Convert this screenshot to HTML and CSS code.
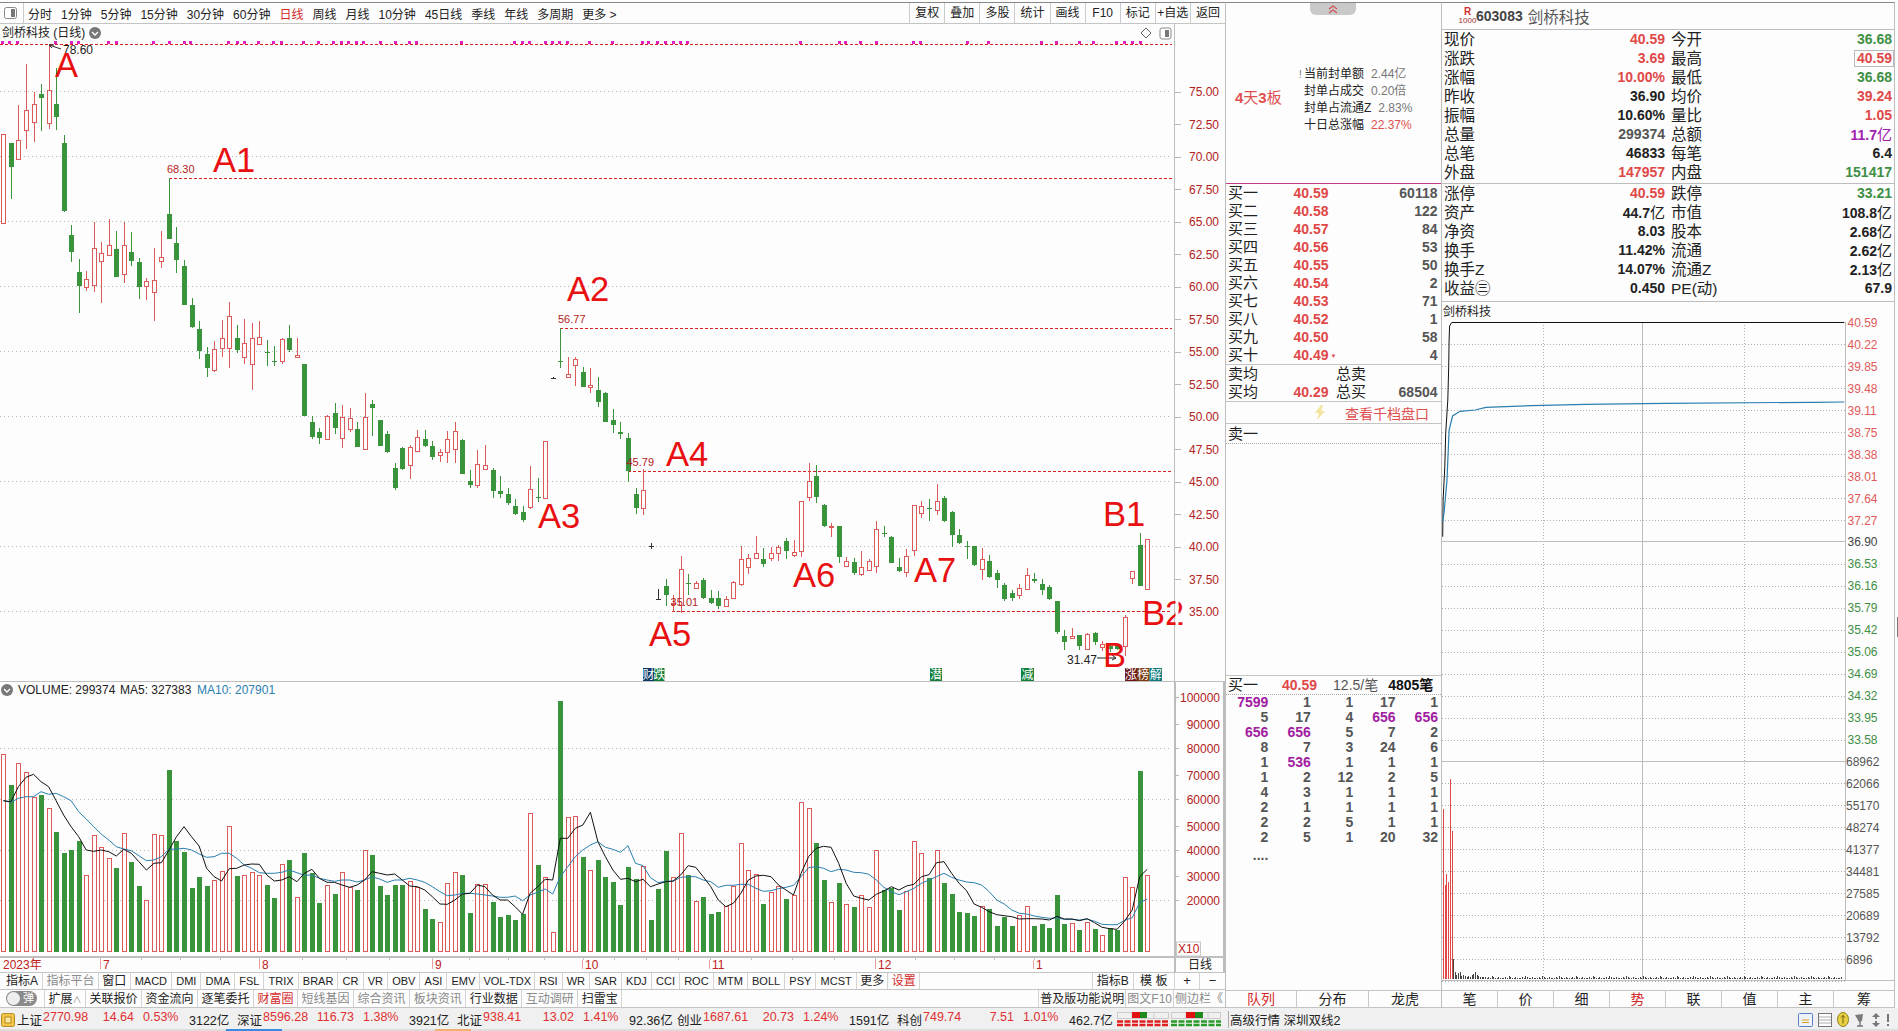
FILE: index.html
```html
<!DOCTYPE html>
<html lang="zh-CN">
<head>
<meta charset="utf-8">
<title>剑桥科技 日线</title>
<link rel="stylesheet" href="styles.css">
</head>
<body>
<div class="main">
  <section class="left">
    <div class="toolbar">
      <div class="tb-icon"><svg width="13" height="12" viewBox="0 0 13 12"><rect x="0.5" y="0.5" width="12" height="11" rx="2" fill="#fff" stroke="#888"/><rect x="7" y="2" width="4" height="8" fill="#777"/></svg></div>
      <div class="tb-tabs">
        <span>分时</span><span>1分钟</span><span>5分钟</span><span>15分钟</span><span>30分钟</span><span>60分钟</span><span class="red">日线</span><span>周线</span><span>月线</span><span>10分钟</span><span>45日线</span><span>季线</span><span>年线</span><span>多周期</span><span>更多 &gt;</span>
      </div>
      <div class="tb-btns">
        <span>复权</span><span>叠加</span><span>多股</span><span>统计</span><span>画线</span><span>F10</span><span>标记</span><span>+自选</span><span>返回</span>
      </div>
    </div>
    <svg id="kline" class="kline" width="1225" height="948" viewBox="0 24 1225 948"></svg>
    <div class="ind-row">
      <span class="c first">指标A</span><span class="c gray">指标平台</span><span class="c">窗口</span><span class="c en">MACD</span><span class="c en">DMI</span><span class="c en">DMA</span><span class="c en">FSL</span><span class="c en">TRIX</span><span class="c en">BRAR</span><span class="c en">CR</span><span class="c en">VR</span><span class="c en">OBV</span><span class="c en">ASI</span><span class="c en">EMV</span><span class="c en tight">VOL-TDX</span><span class="c en">RSI</span><span class="c en">WR</span><span class="c en">SAR</span><span class="c en">KDJ</span><span class="c en">CCI</span><span class="c en">ROC</span><span class="c en">MTM</span><span class="c en">BOLL</span><span class="c en">PSY</span><span class="c en">MCST</span><span class="c">更多</span><span class="c red">设置</span>
      <div class="ind-right">
        <span class="c w41 bl">指标B</span><span class="c w41">模 板</span><span class="c w25">+</span><span class="c w25 noborder">−</span>
      </div>
    </div>
    <div class="tab-row">
      <div class="toggle"><i class="knob"></i><b>弹</b></div>
      <span class="c bl">扩展<small>∧</small></span><span class="c">关联报价</span><span class="c">资金流向</span><span class="c">逐笔委托</span><span class="c red">财富圈</span><span class="c gray">短线基因</span><span class="c gray">综合资讯</span><span class="c gray">板块资讯</span><span class="c">行业数据</span><span class="c gray">互动调研</span><span class="c">扫雷宝</span>
      <div class="ind-right">
        <span class="c bl">普及版功能说明</span><span class="c gray">图文F10</span><span class="c gray noborder">侧边栏《</span>
      </div>
    </div>
  </section>

  <section class="mid">
    <div class="collapse"><svg width="12" height="9" viewBox="0 0 12 9"><path d="M2 4 6 1 10 4M2 8 6 5 10 8" fill="none" stroke="#d05050" stroke-width="1.2"/></svg></div>
    <div class="info">
      <div class="streak"><b>4</b>天<b>3</b>板</div>
      <div class="info-list">
        <div><span class="bang">!</span>当前封单额<em>2.44亿</em></div>
        <div><span class="bang"></span>封单占成交<em>0.20倍</em></div>
        <div><span class="bang"></span>封单占流通Z<em>2.83%</em></div>
        <div><span class="bang"></span>十日总涨幅<em class="red">22.37%</em></div>
      </div>
    </div>
    <div class="ob">
      <div class="ob-row"><span>买一</span><b class="red">40.59</b><b class="qty">60118</b></div>
      <div class="ob-row"><span>买二</span><b class="red">40.58</b><b class="qty">122</b></div>
      <div class="ob-row"><span>买三</span><b class="red">40.57</b><b class="qty">84</b></div>
      <div class="ob-row"><span>买四</span><b class="red">40.56</b><b class="qty">53</b></div>
      <div class="ob-row"><span>买五</span><b class="red">40.55</b><b class="qty">50</b></div>
      <div class="ob-row"><span>买六</span><b class="red">40.54</b><b class="qty">2</b></div>
      <div class="ob-row"><span>买七</span><b class="red">40.53</b><b class="qty">71</b></div>
      <div class="ob-row"><span>买八</span><b class="red">40.52</b><b class="qty">1</b></div>
      <div class="ob-row"><span>买九</span><b class="red">40.50</b><b class="qty">58</b></div>
      <div class="ob-row"><span>买十</span><b class="red">40.49<small class="dn">▼</small></b><b class="qty">4</b></div>
    </div>
    <div class="ob-avg">
      <div class="avg-row"><span>卖均</span><b class="red"></b><span>总卖</span><b class="qty"></b></div>
      <div class="avg-row"><span>买均</span><b class="red">40.29</b><span>总买</span><b class="qty">68504</b></div>
    </div>
    <div class="depth"><svg width="12" height="15" viewBox="0 0 12 15"><path d="M7 0 1 8h4L3 15l8-9H7l2-6z" fill="#f2e59a"/></svg><span>查看千档盘口</span></div>
    <div class="ask"><span>卖一</span></div>
    <div class="ob-gap"></div>
    <div class="queue-head"><span>买一</span><b class="red">40.59</b><em>12.5/笔</em><strong>4805笔</strong></div>
    <div class="queue">
      <b class="pur">7599</b><b>1</b><b>1</b><b>17</b><b>1</b>
      <b>5</b><b>17</b><b>4</b><b class="pur">656</b><b class="pur">656</b>
      <b class="pur">656</b><b class="pur">656</b><b>5</b><b>7</b><b>2</b>
      <b>8</b><b>7</b><b>3</b><b>24</b><b>6</b>
      <b>1</b><b class="pur">536</b><b>1</b><b>1</b><b>1</b>
      <b>1</b><b>2</b><b>12</b><b>2</b><b>5</b>
      <b>4</b><b>3</b><b>1</b><b>1</b><b>1</b>
      <b>2</b><b>1</b><b>1</b><b>1</b><b>1</b>
      <b>2</b><b>2</b><b>5</b><b>1</b><b>1</b>
      <b>2</b><b>5</b><b>1</b><b>20</b><b>32</b>
      <b class="dots">....</b>
    </div>
    <div class="grow"></div>
    <div class="tabs t3"><span class="red">队列</span><span>分布</span><span>龙虎</span></div>
  </section>

  <section class="right">
    <div class="head">
      <div class="rbadge"><b>R</b><i>1000</i></div><strong>603083</strong><span>剑桥科技</span>
    </div>
    <div class="quote q1">
      <div class="q-row"><span>现价</span><b class="red">40.59</b><span class="l2">今开</span><b class="grn">36.68</b></div>
      <div class="q-row"><span>涨跌</span><b class="red">3.69</b><span class="l2">最高</span><b class="red"><i class="boxed">40.59</i></b></div>
      <div class="q-row"><span>涨幅</span><b class="red">10.00%</b><span class="l2">最低</span><b class="grn">36.68</b></div>
      <div class="q-row"><span>昨收</span><b>36.90</b><span class="l2">均价</span><b class="red">39.24</b></div>
      <div class="q-row"><span>振幅</span><b>10.60%</b><span class="l2">量比</span><b class="red">1.05</b></div>
      <div class="q-row"><span>总量</span><b class="gry">299374</b><span class="l2">总额</span><b class="pur">11.7<u>亿</u></b></div>
      <div class="q-row"><span>总笔</span><b>46833</b><span class="l2">每笔</span><b>6.4</b></div>
      <div class="q-row"><span>外盘</span><b class="red">147957</b><span class="l2">内盘</span><b class="grn">151417</b></div>
    </div>
    <div class="quote q2">
      <div class="q-row"><span>涨停</span><b class="red">40.59</b><span class="l2">跌停</span><b class="grn">33.21</b></div>
      <div class="q-row"><span>资产</span><b>44.7<u>亿</u></b><span class="l2">市值</span><b>108.8<u>亿</u></b></div>
      <div class="q-row"><span>净资</span><b>8.03</b><span class="l2">股本</span><b>2.68<u>亿</u></b></div>
      <div class="q-row"><span>换手</span><b>11.42%</b><span class="l2">流通</span><b>2.62<u>亿</u></b></div>
      <div class="q-row"><span>换手Z</span><b>14.07%</b><span class="l2">流通Z</span><b>2.13<u>亿</u></b></div>
      <div class="q-row"><span>收益㊂</span><b>0.450</b><span class="l2">PE(动)</span><b>67.9</b></div>
    </div>
    <svg id="intraday" class="intraday" width="452" height="688" viewBox="1442 302 452 688"></svg>
    <div class="tabs t8"><span>笔</span><span>价</span><span>细</span><span class="red">势</span><span>联</span><span>值</span><span>主</span><span>筹</span></div>
  </section>
</div>

<footer class="status">
  <div class="st-icon"><svg width="14" height="14" viewBox="0 0 14 14"><rect x="0.5" y="0.5" width="13" height="13" rx="2" fill="#f3c64a" stroke="#b98a20"/><rect x="4" y="4" width="6" height="6" fill="#f9e7a0" stroke="#b98a20"/></svg></div>
  <div class="st-g"><span>上证</span><i>2770.98</i><i class="r">14.64</i><i class="p">0.53%</i><span>3122亿</span></div>
  <div class="st-g"><span>深证</span><i>8596.28</i><i class="r">116.73</i><i class="p">1.38%</i><span>3921亿</span></div>
  <div class="st-g"><span>北证</span><i>938.41</i><i class="r">13.02</i><i class="p">1.41%</i><span>92.36亿</span></div>
  <div class="st-g"><span>创业</span><i>1687.61</i><i class="r">20.73</i><i class="p">1.24%</i><span>1591亿</span></div>
  <div class="st-g"><span>科创</span><i>749.74</i><i class="r">7.51</i><i class="p">1.01%</i><span>462.7亿</span></div>
  <div class="mini">
    <svg width="52" height="16" viewBox="0 0 52 16"><g fill="none" stroke="#ccc"><rect x="0.5" y="0.5" width="51" height="6"/><path d="M15 0v7M37 0v7"/></g><rect x="15" y="0" width="8" height="6" fill="#e01010"/><rect x="23" y="0" width="7" height="6" fill="#1e8a1e"/><path d="M0 9.5h52M0 13h52" stroke="#e02020" stroke-width="2.4" stroke-dasharray="6 1.5"/></svg>
    <svg width="50" height="16" viewBox="0 0 50 16"><g fill="none" stroke="#ccc"><rect x="0.5" y="0.5" width="49" height="6"/><path d="M15 0v7M37 0v7"/></g><rect x="15" y="0" width="9" height="6" fill="#e01010"/><rect x="24" y="0" width="8" height="6" fill="#1e8a1e"/><path d="M0 9.5h50M0 13h50" stroke="#2a9a2a" stroke-width="2.4" stroke-dasharray="6 1.5"/></svg>
  </div>
  <div class="st-feed">高级行情 深圳双线2</div>
  <div class="st-tools">
    <svg width="15" height="14" viewBox="0 0 15 14"><rect x="0.5" y="0.5" width="14" height="13" rx="1" fill="#eef3fb" stroke="#5a7fc0"/><path d="M4 7h7M4 9.5h7" stroke="#d8a020"/></svg>
    <svg width="14" height="14" viewBox="0 0 14 14"><rect x="0.5" y="0.5" width="13" height="13" fill="#fff" stroke="#777"/><path d="M1 4h12M1 7h12M1 10h12" stroke="#aaa"/></svg>
    <svg width="12" height="15" viewBox="0 0 12 15"><ellipse cx="6" cy="7.5" rx="5.5" ry="7" fill="#e8d040" stroke="#8a8020"/><path d="M6 3.5v8M4 5.5 6 3.5l2 2" fill="none" stroke="#6a6010"/></svg>
    <svg width="12" height="14" viewBox="0 0 12 14"><path d="M1 2 9 1 8 8 5 9z" fill="#7a7a7a"/><path d="M6 8v5M3 13h6" stroke="#777" stroke-width="1.4"/></svg>
    <svg width="10" height="14" viewBox="0 0 10 14"><path d="M5 0 9 4H6v2H4V4H1zM4 8h2v2h3l-4 4-4-4h3z" fill="#777"/></svg>
    <svg width="4" height="14" viewBox="0 0 4 14"><path d="M1 1h2v8H1zM1 11h2v2H1z" fill="#777"/></svg>
  </div>
  <div class="strip"></div>
</footer>
<div class="grip"></div>
<script src="chart.js"></script>
</body>
</html>
```

FILE: styles.css
```css
* { box-sizing: border-box; }
html, body { margin: 0; padding: 0; }
body {
  position: relative;
  width: 1898px;
  height: 1031px;
  overflow: hidden;
  background: #fdfdfd;
  color: #222;
  font-family: "Liberation Sans", "Noto Sans CJK SC", sans-serif;
  font-size: 12px;
}
.red { color: #d42a2a; }
.gray { color: #8a8a8a; }
.main {
  display: grid;
  grid-template-columns: 1225px 216px 457px;
  height: 1008px;
  margin-top: 0;
  padding-top: 2px;
}
.left, .mid, .right {
  display: flex;
  flex-direction: column;
  border-top: 1px solid #888;
  min-width: 0;
}
.mid { border-left: 1px solid #bdbdbd; }
.right { border-left: 1px solid #bdbdbd; border-right: 1px solid #bdbdbd; margin-right: 3px; }
.grip {
  position: absolute;
  right: 0;
  top: 617px;
  width: 1px;
  height: 20px;
  background: #777;
}

/* toolbar */
.toolbar {
  display: flex;
  align-items: center;
  height: 21px;
  border-bottom: 1px solid #c4c4c4;
}
.tb-icon {
  display: flex;
  align-items: center;
  width: 24px;
  height: 20px;
  padding-left: 4px;
  border-right: 1px solid #ccc;
  flex: none;
}
.tb-tabs { display: flex; gap: 9px; padding-left: 4px; }
.tb-btns { display: flex; margin-left: auto; height: 20px; }
.tb-btns span {
  width: 35.1px;
  line-height: 20px;
  text-align: center;
  border-left: 1px solid #ccc;
}
.kline { display: block; flex: none; }

/* svg text */
.t-axis { font: 12px "Liberation Sans", sans-serif; fill: #b22222; }
.t-red { font: 11px "Liberation Sans", sans-serif; fill: #b22222; }
.t-blk { font: 12px "Liberation Sans", sans-serif; fill: #222; }
.t-blue { font: 12px "Liberation Sans", sans-serif; fill: #2a7fb0; }
.t-cjk { font: 12px "Liberation Sans", "Noto Sans CJK SC", sans-serif; fill: #222; }
.t-note { font: 34.5px "Liberation Sans", sans-serif; fill: #e81010; }
.t-tag { font: 12px "Noto Sans CJK SC", sans-serif; fill: #fff; }
.t-date { font: 12px "Liberation Sans", "Noto Sans CJK SC", sans-serif; fill: #c02020; }
.t-pr { font: 12px "Liberation Sans", sans-serif; fill: #e05a5a; }
.t-pg { font: 12px "Liberation Sans", sans-serif; fill: #3f8f45; }
.t-pk { font: 12px "Liberation Sans", sans-serif; fill: #444; }
.t-vl { font: 12px "Liberation Sans", sans-serif; fill: #555; }

/* lower rows */
.ind-row, .tab-row {
  display: flex;
  align-items: stretch;
  border-top: 1px solid #c4c4c4;
  flex: none;
}
.ind-row { height: 17px; }
.tab-row { height: 19px; border-bottom: 1px solid #c4c4c4; }
.c {
  padding: 0 3.3px;
  border-right: 1px solid #d4d4d4;
  white-space: nowrap;
  line-height: 16px;
  font-size: 12px;
}
.c.en { font-size: 11px; padding: 0 4.1px; }
.c.en.tight { padding: 0 3px; }
.tab-row .c { line-height: 18px; padding: 0 3.5px; }
.tab-row .ind-right .c { padding: 0 1px; }
.tab-row .ind-right .noborder { padding-right: 2px; }
.c.first { padding: 0 4.3px 0 6px; }
.ind-right { display: flex; margin-left: auto; }
.bl { border-left: 1px solid #d4d4d4; }
.c.w41 { width: 41.5px; text-align: center; padding: 0; }
.c.w25 { width: 25px; text-align: center; padding: 0; font-size: 13px; }
.noborder { border-right: 0; }
.toggle {
  position: relative;
  width: 31px;
  height: 15px;
  margin: 1px 7px 0 6px;
  border-radius: 8px;
  background: #8a8a8a;
  flex: none;
}
.toggle .knob {
  position: absolute;
  left: 1px;
  top: 1px;
  width: 13px;
  height: 13px;
  border-radius: 50%;
  background: #eee;
}
.toggle b { position: absolute; right: 3px; top: 0; line-height: 15px; font-weight: 400; font-size: 11px; color: #fff; }
.tab-row small { font-size: 9px; color: #888; }

/* middle panel */
.collapse {
  display: flex;
  justify-content: center;
  align-items: center;
  width: 46px;
  height: 12px;
  margin-left: 84px;
  background: #c9c9c9;
  border-radius: 0 0 6px 6px;
  flex: none;
}
.info { display: flex; align-items: center; height: 168px; padding: 2px 0 0 9px; flex: none; }
.streak { font-size: 15px; color: #e05050; width: 47px; margin-bottom: 8px; white-space: nowrap; }
.info-list { margin-left: 17px; }
.info-list div { height: 17px; line-height: 17px; white-space: nowrap; }
.bang { display: inline-block; width: 5px; color: #777; font-size: 10px; }
.info-list em { font-style: normal; color: #777; margin-left: 7px; }
.info-list em.red { color: #e05050; }
.ob { border-top: 1px solid #c43a8a; flex: none; }
.ob-row {
  display: grid;
  grid-template-columns: 65.5px 1fr auto;
  height: 18px;
  line-height: 18px;
  padding: 0 3.5px 0 2px;
}
.ob-row span, .avg-row span, .queue-head span, .ask span { font-size: 15px; }
.ob-row b, .avg-row b, .queue-head b { font-size: 14px; }
.ob-row .red, .avg-row .red, .queue-head .red { color: #e04848; }
.qty { color: #555; text-align: right; }
.dn { font-size: 6px; margin-left: 2px; vertical-align: 2px; }
.ob-avg { border-top: 1px solid #c4c4c4; flex: none; }
.avg-row {
  display: grid;
  grid-template-columns: 65.5px 42.5px 40px 1fr;
  height: 18px;
  line-height: 18px;
  padding: 0 3.5px 0 2px;
}
.depth {
  display: flex;
  align-items: center;
  height: 22px;
  padding-left: 88px;
  border-top: 1px solid #c4c4c4;
  flex: none;
}
.depth span { margin-left: 19px; font-size: 14px; color: #e05050; }
.ask {
  height: 21px;
  line-height: 20px;
  padding-left: 2px;
  border-top: 1px solid #c4c4c4;
  border-bottom: 1px dotted #aaa;
  flex: none;
}
.ob-gap { height: 231px; flex: none; }
.queue-head {
  display: flex;
  height: 20px;
  line-height: 18px;
  padding-left: 2px;
  border-top: 1px solid #c4c4c4;
  border-bottom: 1px dotted #aaa;
  font-size: 14px;
  flex: none;
  white-space: nowrap;
}
.queue-head b { margin-left: 24px; }
.queue-head em { font-style: normal; margin-left: 16px; color: #555; }
.queue-head strong { margin-left: 10px; color: #111; }
.queue {
  display: grid;
  grid-template-columns: repeat(5, 42.4px);
  grid-auto-rows: 15px;
  line-height: 15px;
  flex: none;
}
.queue b { font-size: 14px; text-align: right; color: #555; }
.queue b.pur { color: #a020a0; }
.queue b.dots { padding-top: 3px; color: #555; }
.grow { flex: 1; }
.tabs {
  display: grid;
  height: 18px;
  border-top: 1px solid #c4c4c4;
  border-bottom: 1px solid #c4c4c4;
  flex: none;
}
.tabs span {
  text-align: center;
  line-height: 16px;
  font-size: 14px;
  border-right: 1px solid #c8c8c8;
}
.tabs span:last-child { border-right: 0; }
.t3 { grid-template-columns: 71px 72px 72px; }
.t8 { grid-template-columns: repeat(7, 56px) 1fr; }

/* right panel */
.head {
  display: flex;
  align-items: center;
  height: 27px;
  padding-left: 17px;
  border-bottom: 1px solid #bdbdbd;
  flex: none;
}
.rbadge { display: flex; flex-direction: column; align-items: center; width: 17px; line-height: 9px; }
.rbadge b { font-size: 10px; color: #d03030; }
.rbadge i { font-size: 8px; font-style: normal; color: #a03030; }
.head strong { font-size: 14px; color: #444; }
.head span { margin-left: 5px; font-size: 15.5px; color: #555; }
.quote { flex: none; border-bottom: 1px solid #bdbdbd; padding-left: 2px; }
.q1 { padding-bottom: 1px; }
.q2 { padding-bottom: 3px; }
.q-row {
  display: grid;
  grid-template-columns: 50px 171px 56px 171px;
  height: 19px;
  line-height: 19px;
  white-space: nowrap;
}
.q-row span { font-size: 15.5px; }
.q-row b { font-size: 14px; text-align: right; color: #222; }
.q-row .l2 { padding-left: 6px; }
.q-row .red { color: #e04848; }
.q-row .grn { color: #3f8f45; }
.q-row .gry { color: #555; }
.q-row .pur { color: #a020b0; }
.q-row u { font-weight: 400; text-decoration: none; font-size: 15px; }
.boxed { font-style: normal; display: inline-block; line-height: 15px; padding: 0 1px 0 2px; margin-right: -2px; border: 1px solid #bbb; }
.intraday { display: block; flex: none; }

/* status */
.status {
  position: relative;
  display: flex;
  align-items: center;
  height: 23px;
  background: #f0f0f0;
  white-space: nowrap;
  font-size: 12.5px;
}
.st-icon { width: 17px; padding-left: 1px; display: flex; flex: none; }
.st-g { display: grid; grid-template-columns: 26px 45px 46px 55px 48px; width: 220px; flex: none; }
.st-g i { font-style: normal; color: #e03030; }
.st-g .r { text-align: right; }
.st-g .p { padding-left: 9px; }
.mini { display: flex; gap: 2px; width: 112px; padding-top: 1px; flex: none; border-right: 1px solid #aaa; }
.st-feed { margin-left: 1px; font-size: 12.5px; }
.st-tools { display: flex; align-items: center; gap: 5px; margin-left: auto; padding-right: 8px; }
.strip {
  position: absolute;
  left: 0;
  right: 0;
  bottom: 0;
  height: 2px;
  background: linear-gradient(90deg, #ddd 226px, #3a8ae0 226px, #3a8ae0 282px, #ddd 282px, #ddd 435px, #f0b070 435px, #f0b070 471px, #ddd 471px);
}
```

FILE: chart.js
```js
var NS = 'http://www.w3.org/2000/svg';
function el(parent, tag, attrs, text) {
  var n = document.createElementNS(NS, tag);
  for (var k in attrs) n.setAttribute(k, attrs[k]);
  if (text !== undefined) n.textContent = text;
  parent.appendChild(n);
  return n;
}
function line(p, x1, y1, x2, y2, stroke, dash, w) {
  var a = { x1: x1, y1: y1, x2: x2, y2: y2, stroke: stroke, 'stroke-width': w || 1, 'shape-rendering': 'crispEdges' };
  if (dash) a['stroke-dasharray'] = dash;
  el(p, 'line', a);
}
function txt(p, x, y, cls, s, anchor) {
  var a = { x: x, y: y, 'class': cls };
  if (anchor) a['text-anchor'] = anchor;
  el(p, 'text', a, s);
}

var RED = '#dd5a5a', GRN = '#3a943c', BG = '#fdfdfd', DASH = '#d62020';
var xOf = function (i) { return 3.4 + 7.525 * i; };

/* color, high, body top, body bottom, low — measured in scaled units: y = y0 + v / 3 */
var segs = [
  [0, 'R 403 403 670 670,G 430 430 503 597,R 315 421 478 478,R 192 331 391 447,R 275 313 367 426,G 252 282 294 392,R 133 271 370 387,G 205 312 350 390,G 405 430 635 635'],
  [240, 'G -45 -15 35 65,G 57 97 138 218,R 93 118 143 152,R -55 25 137 155,R 5 38 62 190,R -63 15 46 46,G -27 27 110 110,R -55 15 103 128,G -23 36 62 77,G 55 66 140 177,R 114 124 140 180,R 25 121 158 242,R -27 52 65 83,G -185 -77 -2 -2,G -40 10 60 98,G 60 78 195 195,G 175 195 260 263,G 243 267 333 356,G 322 343 384 410,R 303 328 390 396,R 240 295 326 350,R 186 229 326 384,G 255 294 330 340,R 237 310 353 372,R 249 295 374 450,R 243 292 314 314,G 300 337 339 378,G 318 364 366 378,R 295 298 364 372,G 255 294 330 335,R 295 346 353 353,G 372 372 528 528,G 528 546 591 597,G 564 576 594 612,R 525 528 597 597,G 490 519 564 582,R 495 532 596 624,R 505 535 569 576,G 546 567 621 621,R 460 531 626 626,G 480 492 504 588,G 540 540 618 618,G 573 582 636 638,G 670 684 745 750,G 620 624 687 690,R 615 622 677 717,R 570 591 632 632,G 570 598 618 621,G 603 618 651 660,R 627 637 647 665,R 573 598 638 668,R 546 573 626 668,G 596 600 701 701'],
  [460, 'G 30 63 75 83,R -30 13 77 83,R -45 16 29 29,G 25 30 92 113,G 48 93 102 113,G 84 102 130 136,G 117 138 162 165,G 138 156 180 186,R 18 88 143 146,G 55 112 114 127'],
  [240, 'R 603 603 774 774,K 412 413 416 416,G 265 364 366 383,R 350 403 412 412,R 350 358 376 437,G 381 396 440 440,R 384 436 442 460,G 411 450 485 500,G 456 459 545 546,G 507 541 557 579,G 546 577 584 597,G 579 594 693 727'],
  [440, 'G 144 162 205 222,R 88 151 206 225,K 310 317 319 326,K 448 477 479 480,G 418 438 465 498,R 465 488 490 515,R 349 388 495 520,G 402 430 433 466,R 423 429 443 448,G 414 420 474 478,G 450 475 491 493,G 452 474 497 506,R 468 477 499 499,R 424 427 475 478,R 319 358 434 438,R 342 355 382 402,R 288 340 355 355,G 325 357 372 382,R 322 340 356 362,R 316 322 340 362,G 295 304 335 356,R 300 337 347 350,R 182 184 334 352,R 69 124 172 182,G 75 108 171 189,G 192 195 258 260,R 250 258 260 290,G 258 258 352 370,R 352 363 379 381,G 354 366 399 405,R 333 382 404 408,R 358 364 391 393,R 243 268 379 399,G 258 280 283 290,G 289 291 368 369,G 354 381 393 397,R 328 349 396 411,R 196 196 331 348,R 184 199 220 234,G 178 203 206 243,R 133 184 211 225,G 169 175 243 246,G 213 216 285 320,G 268 286 311 313,G 304 317 320 358,G 319 319 377 378,R 325 358 388 421,G 346 363 411 414,G 391 400 422 445,G 430 435 477 484,G 450 459 473 482,R 432 443 463 478,R 384 406 448 448,G 400 418 424 430,G 417 433 450 466,G 436 441 478 481,G 482 482 576 582,G 571 589 607 630,R 564 587 593 598,G 586 586 620 630,R 578 582 628 630,G 577 579 607 615,R 604 612 622 633,G 612 618 628 635,G 616 618 628 630,R 525 530 618 647,R 394 394 415 431,G 280 315 437 437,R 296 296 447 447']
];

var vol = 'R222 G315 R250 R277 R350 G345 R385 G456 G519 G510 G483 R586 R466 R502 R535 G564 R460 G546 G618 R661 R463 R466 G270 G483 G516 G624 G591 G618 R601 R574 R439 G588 R586 R577 R586 G615 G654 R553 G540 R652 G519 G579 G669 R616 G642 R577 R620 G630 R511 G525 G618 G645 G615 G615 R604 R621 G687 G717 R727 R610 R577 G585 G699 R613 R613 G666 G711 G705 G720 G702 R400 G555 R592 R757 G63 R412 R409 G531 R571 G540 G591 G606 G675 G561 G597 R559 G720 G627 G513 R592 R460 G585 R663 G651 G702 G696 R678 R618 R490 R571 R583 G672 R636 R618 G657 R645 R367 R385 G489 G600 R666 G609 R672 G681 R646 R681 R511 G630 G624 G690 R632 R484 R519 G594 R511 G609 G642 G696 G699 G708 R678 G687 G738 G711 G738 R705 R678 G738 G732 G744 G645 G732 R729 G750 R726 G747 R765 G744 G750 R592 R621 G273 R585'.split(' ');

var ma5 = [362,365,320,292,283,305,320,362,405,440,470,510,514,510,515,528,508,520,545,570,550,548,510,470,440,470,498,565,590,603,566,565,555,552,553,585,603,600,590,605,580,568,595,607,607,615,622,615,600,575,580,585,582,600,618,620,630,650,672,673,660,642,640,615,620,645,660,660,680,703,640,620,598,600,475,475,445,435,397,485,530,570,598,595,605,598,620,612,605,603,585,557,562,590,620,660,680,670,640,600,588,586,590,615,630,645,580,530,505,499,502,550,610,648,655,660,643,633,620,630,618,613,590,584,548,545,580,610,632,672,682,695,704,707,710,717,716,716,717,720,709,717,717,722,716,728,742,746,748,723,690,590,568];
var ma10 = [362,367,355,350,350,335,343,340,350,362,395,417,440,462,480,500,507,512,527,542,540,530,508,507,505,510,522,532,530,520,520,535,555,565,578,580,580,577,570,578,586,585,595,600,604,600,600,606,600,590,597,607,600,600,595,600,607,620,635,647,645,640,640,642,645,648,652,652,648,662,645,637,627,642,590,560,530,510,495,485,502,508,517,497,550,557,593,608,604,604,592,590,590,600,605,622,616,616,613,613,625,634,632,626,622,616,590,563,560,565,575,568,570,577,578,583,600,622,635,644,635,625,610,600,590,580,592,600,606,608,615,635,660,672,690,700,702,708,712,715,714,718,718,720,717,724,733,734,734,721,713,668,657];

var pinks = [5,23,42,135,175,192,265,283,375,413,450,465,558,580,597,633,670,688,742,780,815,835,853,872,890,930,967,1003,1020,1130,1260,1280,1297,1335,1352,1370,1388,1443,1500];
var pinks2 = [5,20,42,62,80,97,115,393,487,503,540,577,670,687,800,853,983,1020,1075,1111,1167,1187,1205,1224];

function drawKline(svg) {
  var i, y;
  /* grid */
  for (i = 0; i < 9; i++) {
    y = 91.5 + 65 * i;
    line(svg, 0, y, 1172, y, '#b8b8b8', '1 3');
  }
  [748.5, 799.5, 850.5, 900.5].forEach(function (v) { line(svg, 0, v, 1172, v, '#b8b8b8', '1 3'); });

  /* axis */
  line(svg, 1174.5, 24, 1174.5, 682, '#bdbdbd', null, 1);
  line(svg, 1175, 682, 1175, 972, '#bdbdbd', null, 2);
  line(svg, 1224, 682, 1224, 972, '#bdbdbd', null, 2);
  line(svg, 0, 681.5, 1225, 681.5, '#c0c0c0', null, 1);
  line(svg, 0, 956.5, 1225, 956.5, '#c0c0c0', null, 2);

  var prices = ['75.00','72.50','70.00','67.50','65.00','62.50','60.00','57.50','55.00','52.50','50.00','47.50','45.00','42.50','40.00','37.50','35.00'];
  prices.forEach(function (s, k) {
    var yy = 91.5 + 32.5 * k;
    line(svg, 1175, Math.round(yy) + 0.5, 1181, Math.round(yy) + 0.5, '#b8b8b8');
    txt(svg, 1189, yy + 4.5, 't-axis', s);
  });
  [[52,'100000'],[133,'90000'],[205,'80000'],[286,'70000'],[358,'60000'],[439,'50000'],[511,'40000'],[589,'30000'],[661,'20000']].forEach(function (r) {
    var yy = 680 + r[0] / 3;
    line(svg, 1175, Math.round(yy) + 0.5, 1179, Math.round(yy) + 0.5, '#b8b8b8');
    txt(svg, 1220, yy + 4.5, 't-axis', r[1], 'end');
  });

  /* pink marks and top line */
  pinks.forEach(function (z) { el(svg, 'rect', { x: Math.round(z / 2.45) - 1, y: 41, width: 3, height: 3, fill: '#e020c0' }); });
  pinks2.forEach(function (z) { el(svg, 'rect', { x: Math.round(640 + z / 2.45) - 1, y: 41, width: 3, height: 3, fill: '#e020c0' }); });
  line(svg, 0, 44.5, 1172, 44.5, DASH, '3 2');

  /* dashed levels */
  [[169, 178.5], [560, 328.5], [628, 471.5], [672, 611.5]].forEach(function (r) {
    line(svg, r[0], r[1], 1172, r[1], DASH, '3 2');
  });

  /* candles */
  var idx = 0;
  segs.forEach(function (s) {
    var y0 = s[0];
    s[1].split(',').forEach(function (row) {
      var p = row.split(' ');
      var cx = Math.round(xOf(idx));
      var hi = y0 + p[1] / 3, top = y0 + p[2] / 3, bot = y0 + p[3] / 3, lo = y0 + p[4] / 3;
      var col = p[0] === 'R' ? RED : p[0] === 'G' ? GRN : '#333';
      line(svg, cx + 0.5, hi, cx + 0.5, lo, col);
      var h = Math.max(bot - top, 1);
      if (p[0] === 'R') {
        el(svg, 'rect', { x: cx - 1.5, y: Math.round(top) + 0.5, width: 4, height: Math.max(Math.round(h), 1), fill: BG, stroke: col, 'shape-rendering': 'crispEdges' });
      } else {
        el(svg, 'rect', { x: cx - 2, y: Math.round(top), width: 5, height: Math.max(Math.round(h), 1), fill: col, 'shape-rendering': 'crispEdges' });
      }
      idx++;
    });
  });

  /* volume */
  vol.forEach(function (v, k) {
    var cx = Math.round(xOf(k));
    var top = Math.round(680 + v.slice(1) / 3);
    if (v[0] === 'R') {
      el(svg, 'rect', { x: cx - 1.5, y: top + 0.5, width: 4, height: 951 - top, fill: BG, stroke: RED, 'shape-rendering': 'crispEdges' });
    } else {
      el(svg, 'rect', { x: cx - 2, y: top, width: 5, height: 952 - top, fill: GRN, 'shape-rendering': 'crispEdges' });
    }
  });
  function poly(a, col) {
    var pts = a.map(function (v, k) { return xOf(k).toFixed(1) + ',' + (680 + v / 3).toFixed(1); }).join(' ');
    el(svg, 'polyline', { points: pts, fill: 'none', stroke: col, 'stroke-width': 1 });
  }
  poly(ma10, '#2a7fb0');
  poly(ma5, '#111');

  /* legends */
  txt(svg, 2, 37, 't-cjk', '剑桥科技 (日线)');
  function chev(cx, cy) {
    el(svg, 'circle', { cx: cx, cy: cy, r: 6, fill: '#777' });
    el(svg, 'path', { d: 'M' + (cx - 3) + ' ' + (cy - 1) + 'l3 3 3-3', fill: 'none', stroke: '#fff', 'stroke-width': 1.4 });
  }
  chev(95, 33);
  chev(7, 690);
  el(svg, 'path', { d: 'M1146 28l5 5-5 5-5-5z', fill: 'none', stroke: '#666' });
  el(svg, 'rect', { x: 1160, y: 28, width: 11, height: 11, rx: 2, fill: '#fff', stroke: '#888' });
  el(svg, 'rect', { x: 1165, y: 30, width: 4, height: 7, fill: '#777' });
  txt(svg, 18, 693.5, 't-blk', 'VOLUME: 299374');
  txt(svg, 120, 693.5, 't-blk', 'MA5: 327383');
  txt(svg, 197, 693.5, 't-blue', 'MA10: 207901');

  /* price notes */
  txt(svg, 63, 53.5, 't-blk', '78.60');
  el(svg, 'path', { d: 'M49 45 61 49M49 45l5 0M49 45l3 3', fill: 'none', stroke: '#333' });
  txt(svg, 167, 173, 't-red', '68.30');
  txt(svg, 558, 323, 't-red', '56.77');
  txt(svg, 626.5, 466, 't-red', '45.79');
  txt(svg, 670.6, 606, 't-red', '35.01');
  txt(svg, 1067, 663.5, 't-blk', '31.47');
  el(svg, 'path', { d: 'M1097 658h19M1116 658l-4-3M1116 658l-4 2', fill: 'none', stroke: '#222' });

  /* hand drawn labels */
  [['A',55,77],['A1',213,172],['A2',567,301],['A3',538,528],['A4',666,466],['A5',649,646],['A6',793,587],['A7',914,582],['B1',1103,526],['B2',1142,625],['B',1103,667]].forEach(function (r) {
    txt(svg, r[1], r[2], 't-note', r[0]);
  });
  el(svg, 'rect', { x: 1175.5, y: 595, width: 3, height: 40, fill: BG });

  /* event tags */
  [[643,11,'#0b3a68','财'],[654,10.5,'#15803a','跌'],[930,12,'#15803a','潜'],[1021,13,'#15803a','减'],[1125,12,'#6a1616','涨'],[1137,12.5,'#7a3a10','榜'],[1149.5,12.5,'#0e7a80','解']].forEach(function (r) {
    el(svg, 'rect', { x: r[0], y: 668, width: r[1], height: 13, fill: r[2] });
    txt(svg, r[0] + r[1] / 2, 679, 't-tag', r[3], 'middle');
  });

  /* x10 box */
  el(svg, 'rect', { x: 1176.5, y: 942, width: 24, height: 14, fill: 'none', stroke: '#c8c8c8' });
  txt(svg, 1178, 953, 't-date', 'X10');

  /* dates */
  [100,141,180,220,259,302,346,389,432,469,508,544,583,614,646,678,710,751,792,834,875,915,954,994,1034].forEach(function (x) {
    line(svg, x + 0.5, 957, x + 0.5, 960, '#c0c0c0');
  });
  [[3,'2023年'],[102,'7'],[261,'8'],[434,'9'],[584,'10'],[711,'11'],[877,'12'],[1035,'1']].forEach(function (r, k) {
    if (k) line(svg, r[0] - 1.5, 960, r[0] - 1.5, 969, '#e8a0a0');
    txt(svg, r[0] + (k ? 1 : 0), 969, 't-date', r[1]);
  });
  txt(svg, 1200, 969, 't-cjk', '日线', 'middle');
}

function drawIntraday(svg) {
  var i;
  txt(svg, 1443, 316, 't-cjk', '剑桥科技');
  var AX = 1845;
  for (i = 0; i < 20; i++) {
    var y = 344.5 + 22 * i;
    if (i === 9 || i === 19) continue;
    line(svg, 1442, y, AX, y, '#b0b0b0', '1 2');
  }
  for (i = 0; i < 10; i++) {
    var y2 = 783.5 + 22 * i;
    line(svg, 1442, y2, AX, y2, '#b0b0b0', '1 2');
  }
  line(svg, 1543.5, 322, 1543.5, 980, '#b0b0b0', '1 2');
  line(svg, 1642.5, 322, 1642.5, 980, '#bdbdbd');
  line(svg, 1744.5, 322, 1744.5, 980, '#b0b0b0', '1 2');
  line(svg, 1442, 541.5, AX, 541.5, '#bdbdbd');
  line(svg, 1442, 761.5, AX, 761.5, '#bdbdbd');
  line(svg, 1442, 980.5, 1894, 980.5, '#bdbdbd');
  line(svg, AX + 0.5, 322, AX + 0.5, 980, '#bdbdbd');

  var up = ['40.59','40.22','39.85','39.48','39.11','38.75','38.38','38.01','37.64','37.27'];
  up.forEach(function (s, k) { txt(svg, 1847.5, 326.5 + 22 * k, 't-pr', s); });
  txt(svg, 1847.5, 546, 't-pk', '36.90');
  ['36.53','36.16','35.79','35.42','35.06','34.69','34.32','33.95','33.58'].forEach(function (s, k) {
    txt(svg, 1847.5, 567.5 + 22 * k, 't-pg', s);
  });
  ['68962','62066','55170','48274','41377','34481','27585','20689','13792','6896'].forEach(function (s, k) {
    txt(svg, 1846, 765.5 + 22 * k, 't-vl', s);
  });

  /* volume bars */
  var tops = [387,615,582,606,297,453];
  var rest = [838,875,885,880,877,887,885,887,890,888,890,885,882,875,885,888,890,890,892,892,893];
  var base = 979;
  tops.forEach(function (t, k) {
    var x = Math.round(1443 + k * 1.7);
    var yt = 680 + t / 3;
    el(svg, 'rect', { x: x, y: yt, width: 1, height: base - yt, fill: '#e04848', 'shape-rendering': 'crispEdges' });
  });
  var k, seq = [2, 1, 1, 2, 1, 1, 1, 2, 1, 3];
  for (k = 6; k < 238; k++) {
    var h = k - 6 < rest.length ? (897 - rest[k - 6]) / 3 : seq[k % seq.length];
    var x2 = Math.round(1443 + k * 1.68);
    el(svg, 'rect', { x: x2, y: base - h, width: 1, height: h, fill: '#444', 'shape-rendering': 'crispEdges' });
  }

  /* avg and price */
  var P = function (zx, y) { return (1220 + zx / 2.313).toFixed(1) + ',' + y.toFixed(1); };
  var blk = [[515,340+590/3],[516,340+480/3],[520,340+380/3],[522,340+280/3],[527,340+180/3],[529,340+80/3],[530,340],[531,326],[536,322.5],[1444,322.5]];
  el(svg, 'polyline', { points: blk.map(function (p) { return P(p[0], p[1]); }).join(' '), fill: 'none', stroke: '#111', 'stroke-width': 1 });
  var blu = [[515,545],[518,520],[525,420],[530,270],[538,228],[555,214],[590,210],[615,202],[720,197],[845,193],[1030,190],[1370,187],[1444,186]];
  el(svg, 'polyline', { points: blu.map(function (p) { return P(p[0], 340 + p[1] / 3); }).join(' '), fill: 'none', stroke: '#2a7fb0', 'stroke-width': 1.2 });
}

drawKline(document.getElementById('kline'));
drawIntraday(document.getElementById('intraday'));
```
